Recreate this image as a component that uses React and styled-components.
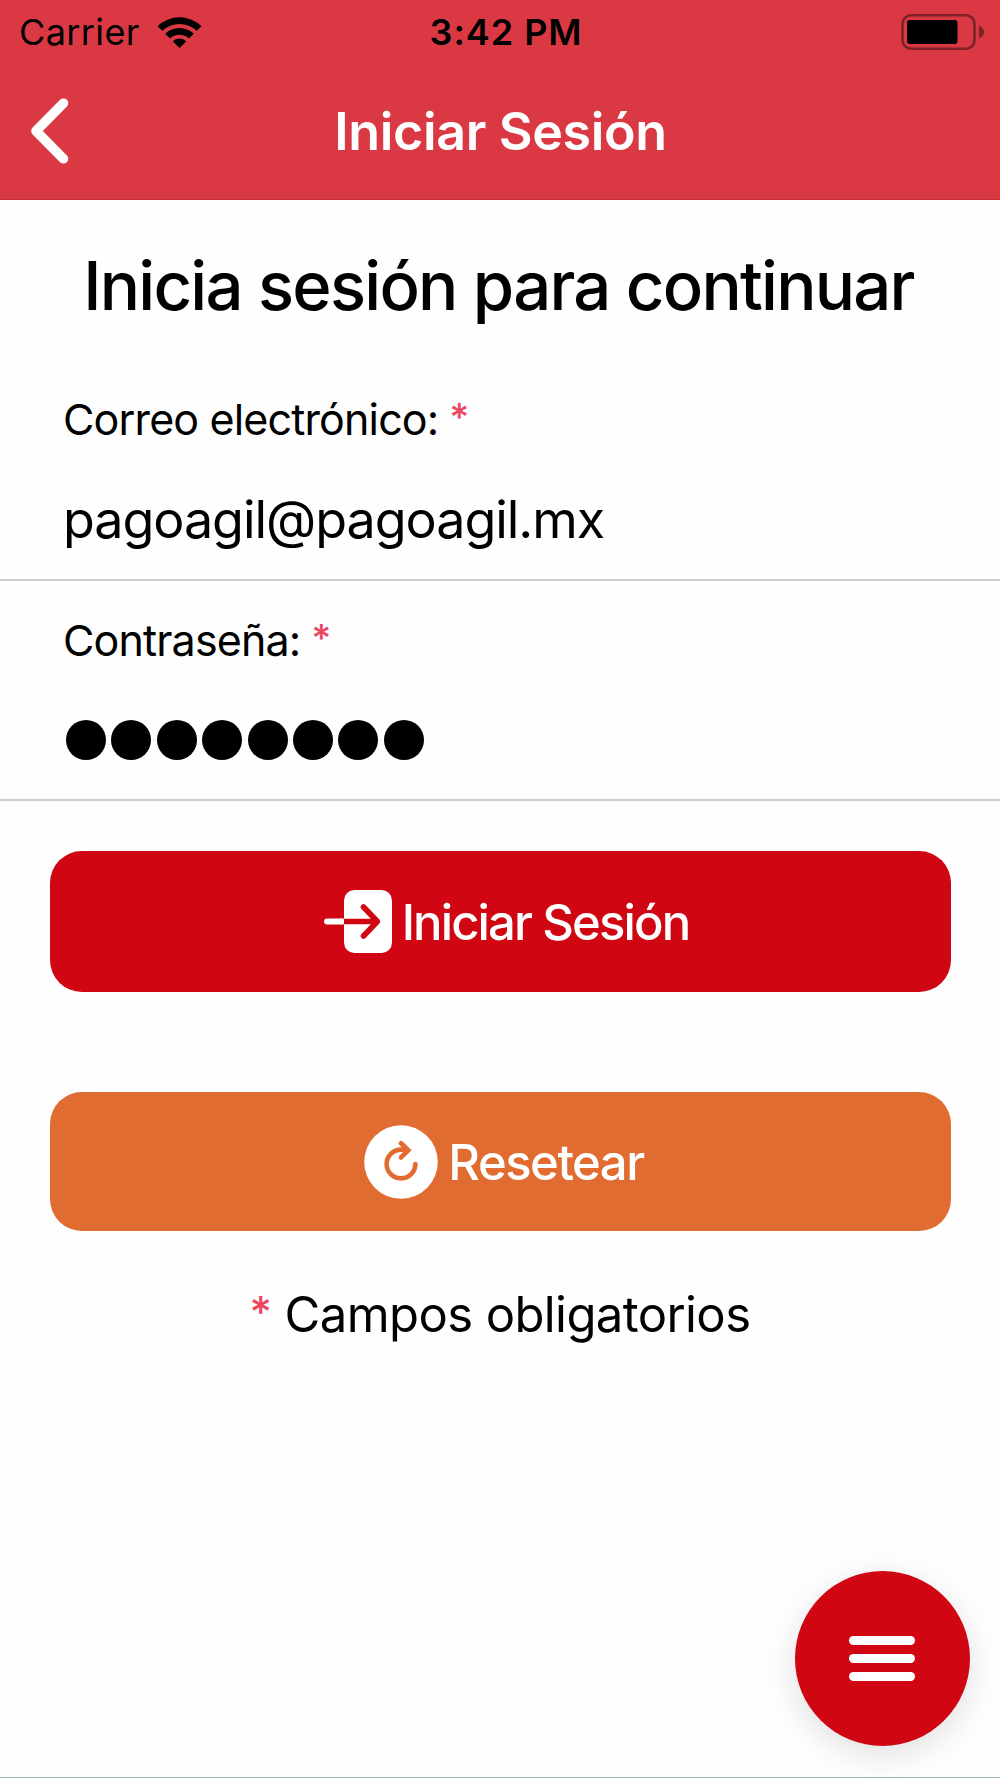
import { useState } from "react";
import styled, { createGlobalStyle } from "styled-components";

const GlobalStyle = createGlobalStyle`
  * {
    box-sizing: border-box;
  }

  body {
    margin: 0;
    background-color: white;
    color: black;
    font-family: Inter, "Liberation Sans", sans-serif;
  }
`;

const Container = styled.div`
  width: 1000px;
  height: 1778px;
  display: flex;
  flex-direction: column;
  position: relative;
  overflow: hidden;
  background-color: #fefefe;
  border-bottom: 1px solid #9cc0c0;
`;

const Header = styled.header`
  height: 200px;
  background-color: #da3943;
  border-bottom: 1px solid #c22f39;
`;

const StatusBar = styled.div`
  height: 64px;
  padding: 0 16px 0 19px;
  display: grid;
  grid-template-columns: 1fr auto 1fr;
  align-items: center;
  font-size: 36px;
  line-height: 64px;
`;

const Carrier = styled.div`
  display: flex;
  align-items: center;
  gap: 17px;
  letter-spacing: 0.4px;
`;

const Clock = styled.div`
  padding-left: 9px;
  font-weight: 600;
  letter-spacing: 0.95px;
`;

const Battery = styled.div`
  display: flex;
  justify-content: flex-end;
`;

const NavBar = styled.div`
  height: 135px;
  padding: 0 29px 0 30px;
  display: grid;
  grid-template-columns: 40px 1fr 40px;
  align-items: center;
`;

const BackButton = styled.button`
  height: 66px;
  margin-bottom: 2px;
  padding: 0;
  border: none;
  background: none;
  cursor: pointer;
`;

const NavTitle = styled.div`
  text-align: center;
  color: white;
  font-size: 52px;
  font-weight: 600;
  letter-spacing: -0.37px;
`;

const Title = styled.h1`
  margin: 0;
  padding: 46px 3px 34px 0;
  text-align: center;
  font-size: 67px;
  line-height: 80px;
  font-weight: 500;
  letter-spacing: -1.74px;
  white-space: nowrap;
`;

const Form = styled.form`
  display: flex;
  flex-direction: column;
`;

const Field = styled.div`
  height: ${(props) => props.$height}px;
  padding: 29px 63px 0;
  display: flex;
  flex-direction: column;
  gap: 30px;
  border-bottom: 2px solid #cdccd2;
`;

const Label = styled.label`
  height: 60px;
  font-size: 43px;
  line-height: 60px;
  letter-spacing: -0.85px;
`;

const Required = styled.span`
  color: #ee4560;
  font-size: 0.88em;
  font-weight: 500;
  line-height: 1;
  vertical-align: 0.1em;
`;

const Input = styled.input`
  height: 80px;
  padding: 0;
  border: none;
  outline: none;
  background: none;
  color: black;
  font-family: inherit;
  font-size: 52px;
  letter-spacing: -1.04px;
`;

const Password = styled.div`
  height: 80px;
  padding-left: 3px;
  display: flex;
  align-items: center;
  gap: 5.4px;
`;

const Dot = styled.span`
  width: 40px;
  height: 40px;
  border-radius: 50%;
  background-color: black;
`;

const Button = styled.button`
  height: ${(props) => props.$height}px;
  margin: ${(props) => props.$top}px 49px 0 50px;
  padding: 0 0 0 ${(props) => props.$indent}px;
  display: flex;
  align-items: center;
  justify-content: center;
  gap: ${(props) => props.$gap}px;
  border: none;
  border-radius: 32px;
  background-color: ${(props) => props.$color};
  color: white;
  font-family: inherit;
  font-size: 49px;
  font-weight: 500;
  letter-spacing: ${(props) => props.$spacing}px;
  cursor: pointer;
`;

const ButtonText = styled.span`
  padding-top: 2px;
`;

const Note = styled.p`
  margin: 54px 0 0;
  text-align: center;
  font-size: 49px;
  line-height: 60px;
  letter-spacing: -0.6px;
`;

const MenuButton = styled.button`
  position: absolute;
  left: 795px;
  top: 1571px;
  width: 175px;
  height: 175px;
  padding: 0 1px 0 0;
  display: flex;
  flex-direction: column;
  align-items: center;
  justify-content: center;
  gap: 9px;
  border: none;
  border-radius: 50%;
  background-color: #d00713;
  box-shadow: 0 9px 34px rgba(0, 0, 0, 0.12);
  cursor: pointer;
`;

const MenuBar = styled.span`
  width: 66px;
  height: 9px;
  border-radius: 5px;
  background-color: white;
`;

const WifiIcon = () => (
  <svg width="45" height="33" viewBox="0 0 44 33" preserveAspectRatio="none">
    <path
      d="M0.5 10.2 A30.5 30.5 0 0 1 43.5 10.2 L38.8 14.8 A24 24 0 0 0 5.2 14.8 Z"
      fill="black"
    />
    <path
      d="M8 17.7 A19.8 19.8 0 0 1 36 17.7 L31.2 22.4 A13.1 13.1 0 0 0 12.8 22.4 Z"
      fill="black"
    />
    <path d="M15.4 25.3 A9.4 9.4 0 0 1 28.6 25.3 L22 32 Z" fill="black" />
  </svg>
);

const BatteryIcon = () => (
  <svg width="84" height="38" viewBox="0 0 84 38">
    <rect
      x="2.5"
      y="2.3"
      width="72"
      height="33.4"
      rx="8.5"
      fill="none"
      stroke="#7f2329"
      strokeWidth="2.6"
    />
    <rect x="7" y="7" width="50.5" height="24" rx="3" fill="black" />
    <path d="M79 12.5 Q84 15 84 19 Q84 23 79 25.5 Z" fill="#7f2329" />
  </svg>
);

const BackIcon = () => (
  <svg width="38" height="66" viewBox="0 0 38 66">
    <path
      d="M32.5 5.2 L5 33 L32.5 60.8"
      fill="none"
      stroke="white"
      strokeWidth="9.6"
      strokeLinecap="round"
      strokeLinejoin="round"
    />
  </svg>
);

const LoginIcon = () => (
  <svg width="68" height="63" viewBox="0 0 68 63">
    <rect x="20" y="0" width="48" height="63" rx="10.5" fill="white" />
    <path d="M3 31.5 H17" stroke="white" strokeWidth="5.8" strokeLinecap="round" />
    <path d="M16 31.5 H20" stroke="white" strokeWidth="5.8" />
    <path d="M20 31.5 H53" stroke="#d00713" strokeWidth="5.6" />
    <path
      d="M39.5 17 L53.4 31.5 L39.5 46"
      fill="none"
      stroke="#d00713"
      strokeWidth="5.6"
      strokeLinecap="round"
      strokeLinejoin="round"
    />
  </svg>
);

const ResetIcon = () => (
  <svg width="74" height="74" viewBox="0 0 74 74">
    <circle cx="37" cy="37" r="36.8" fill="white" />
    <path
      d="M43 24.6 H37 A14.4 14.4 0 1 0 51.4 39"
      fill="none"
      stroke="#e16c31"
      strokeWidth="4.6"
      strokeLinecap="round"
    />
    <path
      d="M37 18.2 L44.2 25.2 L37 32.4"
      fill="none"
      stroke="#e16c31"
      strokeWidth="4.8"
      strokeLinecap="round"
      strokeLinejoin="miter"
    />
  </svg>
);

const App = () => {
  const [email, setEmail] = useState("pagoagil@pagoagil.mx");

  const handleSubmit = (e) => {
    e.preventDefault();
  };

  return (
    <Container>
      <GlobalStyle />
      <Header>
        <StatusBar>
          <Carrier>
            Carrier
            <WifiIcon />
          </Carrier>
          <Clock>3:42 PM</Clock>
          <Battery>
            <BatteryIcon />
          </Battery>
        </StatusBar>
        <NavBar>
          <BackButton aria-label="Atrás">
            <BackIcon />
          </BackButton>
          <NavTitle>Iniciar Sesión</NavTitle>
        </NavBar>
      </Header>

      <Title>Inicia sesión para continuar</Title>

      <Form onSubmit={handleSubmit}>
        <Field $height={221}>
          <Label>
            Correo electrónico: <Required>*</Required>
          </Label>
          <Input value={email} onChange={(e) => setEmail(e.target.value)} />
        </Field>
        <Field $height={220}>
          <Label>
            Contraseña: <Required>*</Required>
          </Label>
          <Password>
            {[...Array(8)].map((_, i) => (
              <Dot key={i} />
            ))}
          </Password>
        </Field>
        <Button
          type="submit"
          $color="#d00713"
          $height={141}
          $top={50}
          $gap={10}
          $indent={12}
          $spacing={-1.87}
        >
          <LoginIcon />
          <ButtonText>Iniciar Sesión</ButtonText>
        </Button>
        <Button
          type="reset"
          $color="#e16c31"
          $height={139}
          $top={100}
          $gap={10}
          $indent={7}
          $spacing={-1.5}
        >
          <ResetIcon />
          <ButtonText>Resetear</ButtonText>
        </Button>
        <Note>
          <Required>*</Required> Campos obligatorios
        </Note>
      </Form>

      <MenuButton aria-label="Menú">
        <MenuBar />
        <MenuBar />
        <MenuBar />
      </MenuButton>
    </Container>
  );
};

export default App;
